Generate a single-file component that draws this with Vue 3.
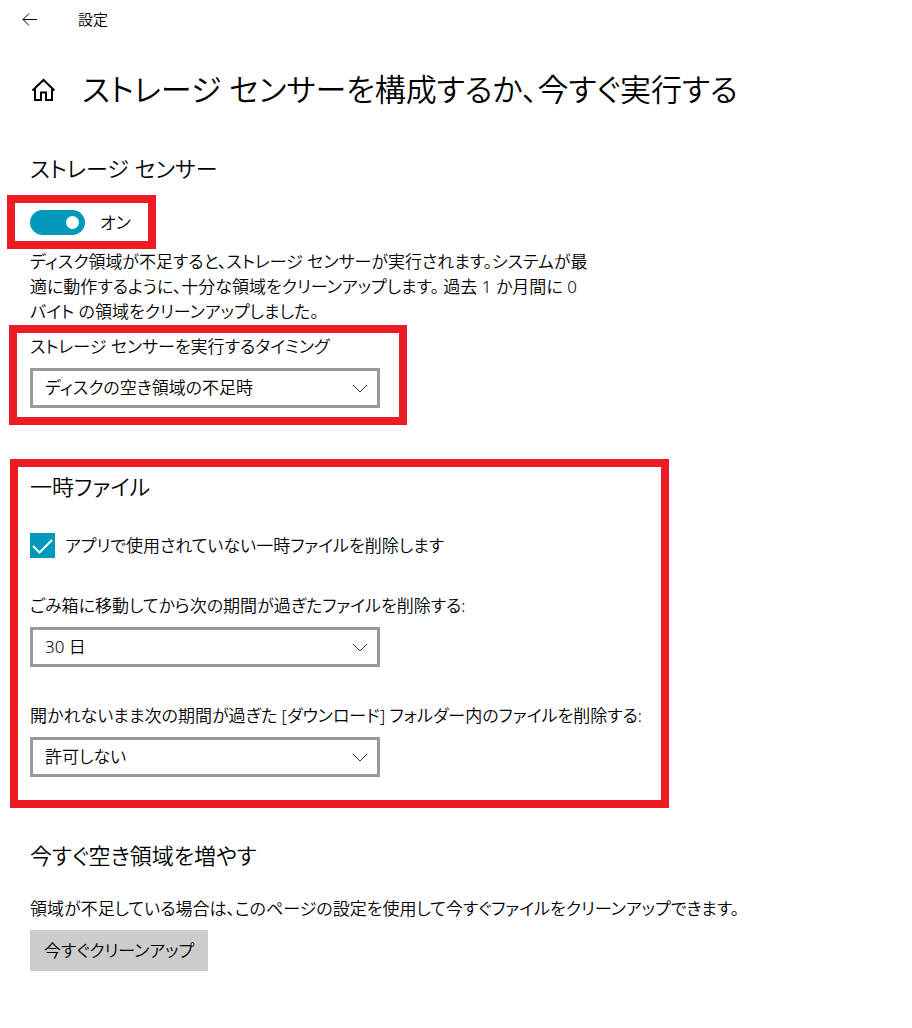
<script setup>
import { ref } from 'vue'

const senseOn = ref(true)
const removeTemp = ref(true)
const timing = ref('low')
const recycle = ref('30')
const downloads = ref('never')

const timingOptions = [
    { value: 'low', text: 'ディスクの空き領域の不足時' },
    { value: 'day', text: '毎日' },
    { value: 'week', text: '毎週' },
    { value: 'month', text: '毎月' }
]

const periodOptions = [
    { value: 'never', text: '許可しない' },
    { value: '1', text: '1 日' },
    { value: '14', text: '14 日' },
    { value: '30', text: '30 日' },
    { value: '60', text: '60 日' }
]
</script>

<template>
    <div class="page">
        <header class="titlebar">
            <button class="back" type="button" aria-label="戻る">
                <svg width="16" height="14" viewBox="0 0 16 14">
                    <path d="M15 7.5H1M7 1.5L1 7.5L7 13.5" />
                </svg>
            </button>
            <span>設定</span>
        </header>

        <div class="heading">
            <a class="home" href="#" aria-label="ホーム">
                <svg width="25" height="26" viewBox="0 0 25 26">
                    <path d="M1.5 14.5L12.5 4L23.5 14.5M4 12.5V24H10V16.5H15V24H21V12.5" />
                </svg>
            </a>
            <h1>ストレージ センサーを構成するか、今すぐ実行する</h1>
        </div>

        <main>
            <h2>ストレージ センサー</h2>
            <div class="frame frame-switch">
                <label class="switch">
                    <input v-model="senseOn" type="checkbox" role="switch" />
                    <span>{{ senseOn ? 'オン' : 'オフ' }}</span>
                </label>
            </div>
            <p>
                ディスク領域が不足すると、ストレージ センサーが実行されます。システムが最<br />
                適に動作するように、十分な領域をクリーンアップします。 過去 1 か月間に 0<br />
                バイト の領域をクリーンアップしました。
            </p>

            <div class="frame frame-timing">
                <label for="timing">ストレージ センサーを実行するタイミング</label>
                <div class="select">
                    <select id="timing" v-model="timing">
                        <option v-for="o in timingOptions" :key="o.value" :value="o.value">{{ o.text }}</option>
                    </select>
                    <svg width="16" height="9" viewBox="0 0 16 9"><path d="M1 1L8 8L15 1" /></svg>
                </div>
            </div>

            <section class="frame frame-temp">
                <h2>一時ファイル</h2>
                <label class="check">
                    <span class="box">
                        <input v-model="removeTemp" type="checkbox" />
                        <svg v-if="removeTemp" width="25" height="25" viewBox="0 0 25 25"><path d="M3 13L9.5 19.5L22 7" /></svg>
                    </span>
                    <span>アプリで使用されていない一時ファイルを削除します</span>
                </label>
                <div class="fields">
                    <div>
                        <label for="recycle">ごみ箱に移動してから次の期間が過ぎたファイルを削除する:</label>
                        <div class="select">
                            <select id="recycle" v-model="recycle">
                                <option v-for="o in periodOptions" :key="o.value" :value="o.value">{{ o.text }}</option>
                            </select>
                            <svg width="16" height="9" viewBox="0 0 16 9"><path d="M1 1L8 8L15 1" /></svg>
                        </div>
                    </div>
                    <div>
                        <label for="downloads">開かれないまま次の期間が過ぎた [ダウンロード] フォルダー内のファイルを削除する:</label>
                        <div class="select">
                            <select id="downloads" v-model="downloads">
                                <option v-for="o in periodOptions" :key="o.value" :value="o.value">{{ o.text }}</option>
                            </select>
                            <svg width="16" height="9" viewBox="0 0 16 9"><path d="M1 1L8 8L15 1" /></svg>
                        </div>
                    </div>
                </div>
            </section>

            <section class="free">
                <h2>今すぐ空き領域を増やす</h2>
                <p>領域が不足している場合は、このページの設定を使用して今すぐファイルをクリーンアップできます。</p>
                <button class="clean" type="button">今すぐクリーンアップ</button>
            </section>
        </main>
    </div>
</template>

<style>
    body {
        margin: 0;
        background: #fff;
    }
</style>

<style scoped>
    .page {
        padding-bottom: 56px;
        color: #000;
        font-family: "Noto Sans", "Noto Sans CJK JP", sans-serif;
        font-size: 17px;
        font-weight: 350;
        font-feature-settings: "palt";
        line-height: 25px;
        white-space: nowrap;
    }
    button, select {
        font: inherit;
        font-feature-settings: inherit;
        color: inherit;
        border: 0;
        border-radius: 0;
    }
    svg {
        display: block;
        fill: none;
        stroke: #000;
    }
    .titlebar {
        display: flex;
        align-items: center;
        gap: 40px;
        height: 38px;
        padding-left: 22px;
        font-size: 15px;
    }
    .back {
        padding: 0;
        background: none;
    }
    .heading {
        display: flex;
        align-items: center;
        gap: 26px;
        height: 102px;
        padding-left: 31px;
    }
    .home svg {
        stroke-width: 2;
    }
    h1, h2, p {
        margin: 0;
        font-weight: inherit;
    }
    h1 {
        font-size: 31px;
        line-height: 48px;
    }
    h2 {
        font-size: 22px;
        line-height: 32px;
    }
    main {
        display: flex;
        flex-direction: column;
        align-items: flex-start;
        padding: 12px 30px 0;
    }
    .frame {
        border: 8px solid #ed1c24;
    }
    .frame-switch {
        margin: 11px 0 0 -23px;
        padding: 7px 17px 6px 15px;
    }
    .frame-timing {
        margin: 1px 0 0 -21px;
        padding: 1px 19px 9px 13px;
    }
    .frame-temp {
        margin: 34px 0 0 -20px;
        padding: 3px 19px 23px 12px;
    }
    .switch, .check {
        display: flex;
        align-items: center;
        gap: 15px;
    }
    .switch input {
        display: flex;
        align-items: center;
        width: 55px;
        height: 25px;
        margin: 0;
        padding: 0 6px;
        box-sizing: border-box;
        appearance: none;
        border-radius: 13px;
        background: #999;
    }
    .switch input::before {
        content: "";
        width: 13px;
        height: 13px;
        border-radius: 50%;
        background: #fff;
    }
    .switch input:checked {
        justify-content: flex-end;
        background: #0099bc;
    }
    .check {
        gap: 10px;
        margin-top: 31px;
    }
    .box {
        display: grid;
    }
    .box > * {
        grid-area: 1 / 1;
    }
    .box input {
        width: 25px;
        height: 25px;
        margin: 0;
        box-sizing: border-box;
        appearance: none;
        border: 2px solid #999;
    }
    .box input:checked {
        border: 0;
        background: #0099bc;
    }
    .box svg {
        stroke: #fff;
        stroke-width: 2;
        pointer-events: none;
    }
    .fields {
        display: grid;
        gap: 36px;
        margin-top: 35px;
    }
    .frame-timing label, .fields label {
        display: block;
    }
    .select {
        display: grid;
        align-items: center;
        width: 350px;
        margin-top: 9px;
    }
    .select > * {
        grid-area: 1 / 1;
    }
    .select select {
        width: 100%;
        height: 40px;
        padding: 0 40px 2px 12px;
        appearance: none;
        border: 3px solid #999;
        background: #fff;
    }
    .select svg {
        justify-self: end;
        margin-right: 12px;
        stroke: #333;
        pointer-events: none;
    }
    .free {
        margin-top: 31px;
    }
    .free p {
        margin-top: 25px;
    }
    .clean {
        height: 41px;
        margin-top: 9px;
        padding: 0 14px;
        background: #ccc;
    }
</style>
